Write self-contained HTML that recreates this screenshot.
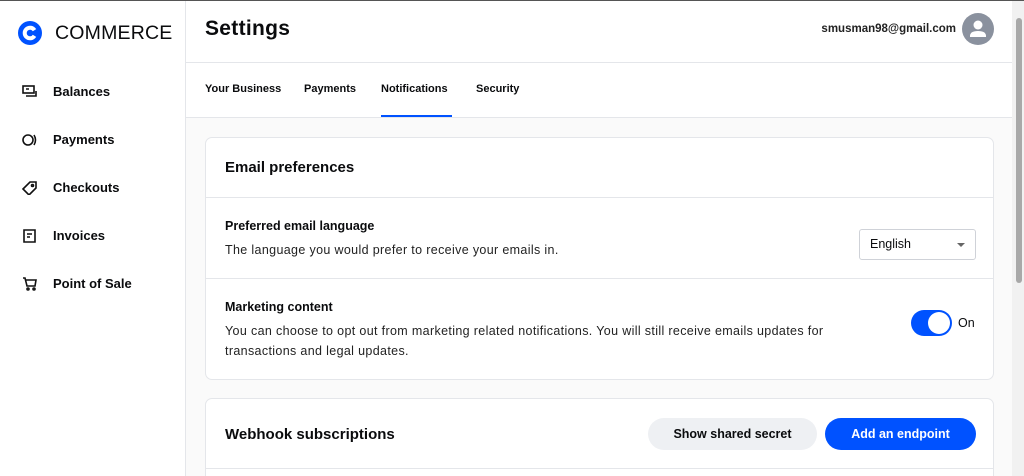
<!DOCTYPE html>
<html style="overflow:hidden"><head><style>
*{box-sizing:border-box;margin:0;padding:0}
html,body{width:1024px;height:476px;overflow:hidden}
body{font-family:"Liberation Sans",sans-serif;color:#0a0b0d;background:#fff;position:relative}
.top{position:absolute;left:0;top:0;width:1024px;height:1px;background:#555}
.side{position:absolute;left:0;top:1px;width:186px;height:475px;border-right:1px solid #e4e6ea;background:#fff}
.logo{position:absolute;left:18px;top:20px;display:flex;align-items:center}
.logo span{font-size:19.5px;margin-left:13px;letter-spacing:.2px;color:#0a0b0d}
.nav{position:absolute;left:22px;display:flex;align-items:center;font-size:13px;font-weight:bold}
.nav svg{margin-right:15px}
.main{position:absolute;left:186px;top:1px;width:826px;height:475px;background:#fafafa;overflow:hidden}
.hdr{height:62px;border-bottom:1px solid #e4e6ea;background:#fff;position:relative}
.hdr h1{position:absolute;left:19px;top:16px;font-size:21px;font-weight:bold;letter-spacing:.3px}
.email{position:absolute;right:56px;top:22px;font-size:11.5px;font-weight:bold;color:#222}
.av{position:absolute;right:18px;top:12px;width:32px;height:32px;border-radius:50%;background:#8a919e}
.tabs{height:55px;border-bottom:1px solid #e4e6ea;background:#fff;position:relative}
.tab{position:absolute;top:20px;font-size:11px;font-weight:bold}
.ul{position:absolute;left:195px;top:52px;width:71px;height:2px;background:#0052ff}
.card{position:absolute;left:19px;width:789px;background:#fff;border:1px solid #e4e6ea;border-radius:7px}
.row{position:absolute;left:0;width:100%;border-top:1px solid #e4e6ea}
.t{position:absolute;left:19px;font-size:12.5px;font-weight:bold}
.d{position:absolute;left:19px;font-size:12.5px;color:#222;line-height:20px;letter-spacing:.35px;white-space:nowrap}
.sb{position:absolute;left:1012px;top:1px;width:12px;height:475px;background:#f1f1f1}
.th{position:absolute;left:1016px;top:18px;width:6px;height:265px;background:#a8a8a8;border-radius:3px}
</style></head><body>
<div class="top"></div>
<div class="side">
 <div class="logo"><svg width="24" height="24" viewBox="0 0 24 24"><circle cx="12" cy="12" r="12" fill="#0052ff"/><path d="M16.5 9.2A5.3 5.3 0 1 0 16.5 14.8" stroke="#fff" stroke-width="4" fill="none"/></svg><span>COMMERCE</span></div>
 <div class="nav" style="top:83px"><svg width="16" height="14" viewBox="0 0 16 14" fill="none" stroke="#111" stroke-width="1.6"><rect x="1" y="1" width="11" height="7"/><path d="M4 4h3M14 6v5H4"/></svg>Balances</div>
 <div class="nav" style="top:131px"><svg width="16" height="14" viewBox="0 0 16 14" fill="none" stroke="#111" stroke-width="1.6"><circle cx="6" cy="7" r="5"/><path d="M12 2q3 5 0 10"/></svg>Payments</div>
 <div class="nav" style="top:179px"><svg width="16" height="14" viewBox="0 0 16 14" fill="none" stroke="#111" stroke-width="1.6"><path d="M1 8l7-7h6v6l-7 7z"/><circle cx="10.5" cy="4.5" r="1"/></svg>Checkouts</div>
 <div class="nav" style="top:227px"><svg width="16" height="14" viewBox="0 0 16 14" fill="none" stroke="#111" stroke-width="1.6"><path d="M2 1h11v12H2zM5 5h5M5 8h3"/></svg>Invoices</div>
 <div class="nav" style="top:275px"><svg width="16" height="14" viewBox="0 0 16 14" fill="none" stroke="#111" stroke-width="1.6"><path d="M1 1h2l2 8h8l1-6H4"/><circle cx="6" cy="12" r="1"/><circle cx="12" cy="12" r="1"/></svg>Point of Sale</div>
</div>
<div class="main">
 <div class="hdr"><h1>Settings</h1><div class="email">smusman98@gmail.com</div>
  <div class="av"><svg width="32" height="32" viewBox="0 0 32 32"><circle cx="16" cy="12" r="4.5" fill="#fff"/><path d="M8 23q0-5 8-5t8 5v1H8z" fill="#fff"/></svg></div></div>
 <div class="tabs">
  <div class="tab" style="left:19px">Your Business</div>
  <div class="tab" style="left:118px">Payments</div>
  <div class="tab" style="left:195px">Notifications</div>
  <div class="tab" style="left:290px">Security</div>
  <div class="ul"></div>
 </div>
 <div class="card" style="top:136px;height:243px">
  <div class="t" style="top:21px;font-size:15px">Email preferences</div>
  <div class="row" style="top:59px;height:81px">
   <div class="t" style="top:21px">Preferred email language</div>
   <div class="d" style="top:42px">The language you would prefer to receive your emails in.</div>
   <div style="position:absolute;left:653px;top:31px;width:117px;height:31px;border:1px solid #cfd2d8;border-radius:3px;font-size:12.5px;padding:7px 10px">English<span style="position:absolute;right:10px;top:13px;border:4px solid transparent;border-top:4px solid #666"></span></div>
  </div>
  <div class="row" style="top:140px;height:101px">
   <div class="t" style="top:21px">Marketing content</div>
   <div class="d" style="top:42px">You can choose to opt out from marketing related notifications. You will still receive emails updates for<br>transactions and legal updates.</div>
   <div style="position:absolute;left:705px;top:31px;width:41px;height:26px;border-radius:13px;background:#0052ff"><div style="position:absolute;right:2px;top:2px;width:22px;height:22px;border-radius:50%;background:#fff"></div></div>
   <div style="position:absolute;left:752px;top:37px;font-size:12.5px">On</div>
  </div>
 </div>
 <div class="card" style="top:397px;height:100px">
  <div class="t" style="top:27px;font-size:15px">Webhook subscriptions</div>
  <div style="position:absolute;left:442px;top:19px;width:169px;height:32px;border-radius:16px;background:#eef0f3;font-size:12.5px;font-weight:bold;text-align:center;line-height:32px">Show shared secret</div>
  <div style="position:absolute;left:619px;top:19px;width:151px;height:32px;border-radius:16px;background:#0052ff;color:#fff;font-size:12.5px;font-weight:bold;text-align:center;line-height:32px">Add an endpoint</div>
  <div class="row" style="top:69px;height:1px"></div>
 </div>
</div>
<div class="sb"></div><div class="th"></div>
</body></html>
